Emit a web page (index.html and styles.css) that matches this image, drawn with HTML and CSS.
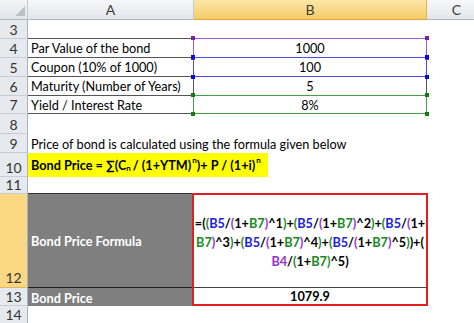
FILE: index.html
```html
<!DOCTYPE html>
<html>
<head>
<meta charset="utf-8">
<link rel="stylesheet" href="styles.css">
</head>
<body>
<div class="sheet">
  <div class="corner"><span class="tri"></span></div>
  <div class="ch">A</div>
  <div class="ch sel">B</div>
  <div class="ch">C</div>

  <div class="rh">3</div><div class="c bb"></div><div class="c bb"></div><div class="c"></div>

  <div class="rh">4</div>
  <div class="c tbl a">Par Value of the bond</div>
  <div class="c tbl v">1000<div class="hl hp"><i class="sq tl"></i><i class="sq tr"></i><i class="sq bl"></i><i class="sq br"></i></div></div>
  <div class="c"></div>

  <div class="rh">5</div>
  <div class="c tbl a">Coupon (10% of 1000)</div>
  <div class="c tbl v">100<div class="hl hb"><i class="sq tl"></i><i class="sq tr"></i><i class="sq bl"></i><i class="sq br"></i></div></div>
  <div class="c"></div>

  <div class="rh">6</div>
  <div class="c tbl a">Maturity (Number of Years)</div>
  <div class="c tbl v">5</div>
  <div class="c"></div>

  <div class="rh">7</div>
  <div class="c tbl a">Yield / Interest Rate</div>
  <div class="c tbl v">8%<div class="hl hg"><i class="sq tl"></i><i class="sq tr"></i><i class="sq bl"></i><i class="sq br"></i></div></div>
  <div class="c"></div>

  <div class="rh">8</div><div class="c"></div><div class="c"></div><div class="c"></div>

  <div class="rh">9</div>
  <div class="c wide a">Price of bond is calculated using the formula given below</div>

  <div class="rh">10</div>
  <div class="c wide"><span class="hiyel">Bond Price = ∑(C<span class="sub">n</span> / (1+YTM)<span class="sup">n</span> )+ P / (1+i)<span class="sup">n</span></span></div>

  <div class="rh">11</div><div class="c dk"></div><div class="c"></div><div class="c"></div>

  <div class="rh rsel">12</div>
  <div class="c gray g12">Bond Price Formula</div>
  <div class="fbox">
    <div class="fformula">
      <div class="fl"><span>=(</span><span class="cg">(</span><span class="cb">B5</span>/<span class="cp">(</span>1+<span class="cg">B7</span><span class="cp">)</span>^1<span class="cg">)</span>+<span class="cg">(</span><span class="cb">B5</span>/<span class="cp">(</span>1+<span class="cg">B7</span><span class="cp">)</span>^2<span class="cg">)</span>+<span class="cg">(</span><span class="cb">B5</span>/<span class="cp">(</span>1+</div>
      <div class="fl"><span class="cg">B7</span><span class="cp">)</span>^3<span class="cg">)</span>+<span class="cg">(</span><span class="cb">B5</span>/<span class="cp">(</span>1+<span class="cg">B7</span><span class="cp">)</span>^4<span class="cg">)</span>+<span class="cg">(</span><span class="cb">B5</span>/<span class="cp">(</span>1+<span class="cg">B7</span><span class="cp">)</span>^5<span class="cg">)</span>)+(</div>
      <div class="fl"><span class="cp">B4</span>/<span class="cg">(</span>1+<span class="cg">B7</span><span class="cg">)</span>^5)</div>
    </div>
    <div class="fvalue">1079.9</div>
  </div>
  <div class="c c12"></div>

  <div class="rh">13</div>
  <div class="c gray g13">Bond Price</div>

  <div class="rh">14</div><div class="c"></div><div class="c"></div><div class="c"></div>
</div>
</body>
</html>
```
FILE: styles.css
```css
html, body {
  margin: 0;
  padding: 0;
  background: #ffffff;
}
.sheet {
  width: 474px;
  height: 323px;
  overflow: hidden;
  display: grid;
  grid-template-columns: 28px 166px 233px 60px;
  grid-template-rows: 20px 19px 19px 19px 19px 18px 20px 19px 24px 17px 94px 18px 18px;
  font-family: Lato, "Liberation Sans", sans-serif;
  font-size: 12.7px;
  color: #000;
}
.sheet > div {
  box-sizing: border-box;
  min-width: 0;
}
.corner {
  background: linear-gradient(#f3f5f7, #e2e6eb);
  border-right: 1px solid #c3cad3;
  border-bottom: 1px solid #aeb8c4;
  position: relative;
}
.tri {
  position: absolute;
  right: 2px;
  bottom: 3px;
  width: 0;
  height: 0;
  border-left: 10px solid transparent;
  border-bottom: 10px solid #b9c1cb;
}
.ch {
  background: linear-gradient(#f6f7f9, #e3e7ec);
  border-right: 1px solid #c3cad3;
  border-bottom: 1px solid #aeb8c4;
  display: flex;
  align-items: center;
  justify-content: center;
  color: #3c3c3c;
  font-size: 14px;
}
.ch.sel {
  background: linear-gradient(#fbe6a6, #f6cb68);
  border-right-color: #e7b44c;
  border-bottom-color: #e2a638;
}
.rh {
  background: #e6eaef;
  border-right: 1px solid #a9b4c1;
  border-bottom: 1px solid #c6cdd6;
  display: flex;
  align-items: flex-end;
  justify-content: center;
  color: #333;
  font-size: 14px;
  line-height: 17px;
}
.rh.rsel {
  background: #f9d783;
  border-bottom-color: #d9b86a;
  padding-bottom: 1px;
}
.c {
  display: flex;
  align-items: center;
  white-space: nowrap;
  position: relative;
}
.a {
  padding-left: 3px;
}
.bb {
  border-bottom: 1px solid #555;
}
.tbl {
  border-bottom: 1px solid #555;
  border-right: 1px solid #555;
  overflow: visible;
}
.v {
  justify-content: center;
}
.wide {
  grid-column: 2 / 5;
}
.hiyel {
  display: flex;
  align-items: center;
  height: 100%;
  width: 240px;
  box-sizing: border-box;
  padding-left: 3px;
  background: #ffff00;
  font-weight: bold;
}
.sub, .sup {
  font-size: 8px;
  position: relative;
}
.sub { top: 3px; margin-right: 2px; }
.sup { top: -5px; margin-left: 1px; }
.dk {
  border-bottom: 1px solid #333;
}
.gray {
  background: #7f7f7f;
  color: #ffffff;
  font-weight: bold;
  padding-left: 3px;
}
.g12 {
  border-bottom: 1px solid #1e1e1e;
}
.g13 {
  padding-top: 1px;
}
.c12 {
  grid-row: span 2;
}
.fbox {
  grid-row: span 2;
  margin: -1px -1px 0 -2px;
  border: 2px solid #e41e1e;
  display: flex;
  flex-direction: column;
  position: relative;
  z-index: 2;
  background: #fff;
  font-weight: bold;
}
.fformula {
  flex: 1;
  display: flex;
  flex-direction: column;
  justify-content: center;
  align-items: center;
  padding-top: 2px;
}
.fl {
  white-space: nowrap;
  line-height: 19px;
}
.fvalue {
  height: 17px;
  box-sizing: border-box;
  border-top: 1px solid #444;
  display: flex;
  align-items: center;
  justify-content: center;
  line-height: 16px;
}
.cb { color: #1f22e0; }
.cg { color: #1c8a24; }
.cp { color: #9a2fd0; }
.hl {
  position: absolute;
  left: -1px;
  right: -1px;
  top: -1px;
  bottom: -1px;
  border: 1px solid;
  z-index: 1;
}
.hp { border-color: #a257d6; }
.hb { border-color: #4b4bec; }
.hg { border-color: #47a047; }
.sq {
  position: absolute;
  width: 4px;
  height: 4px;
}
.hp .sq { background: #7b1fa8; }
.hb .sq { background: #0a0ae0; }
.hg .sq { background: #157a15; }
.tl { left: -3px; top: -3px; }
.tr { right: -3px; top: -3px; }
.bl { left: -3px; bottom: -3px; }
.br { right: -3px; bottom: -3px; }
```
